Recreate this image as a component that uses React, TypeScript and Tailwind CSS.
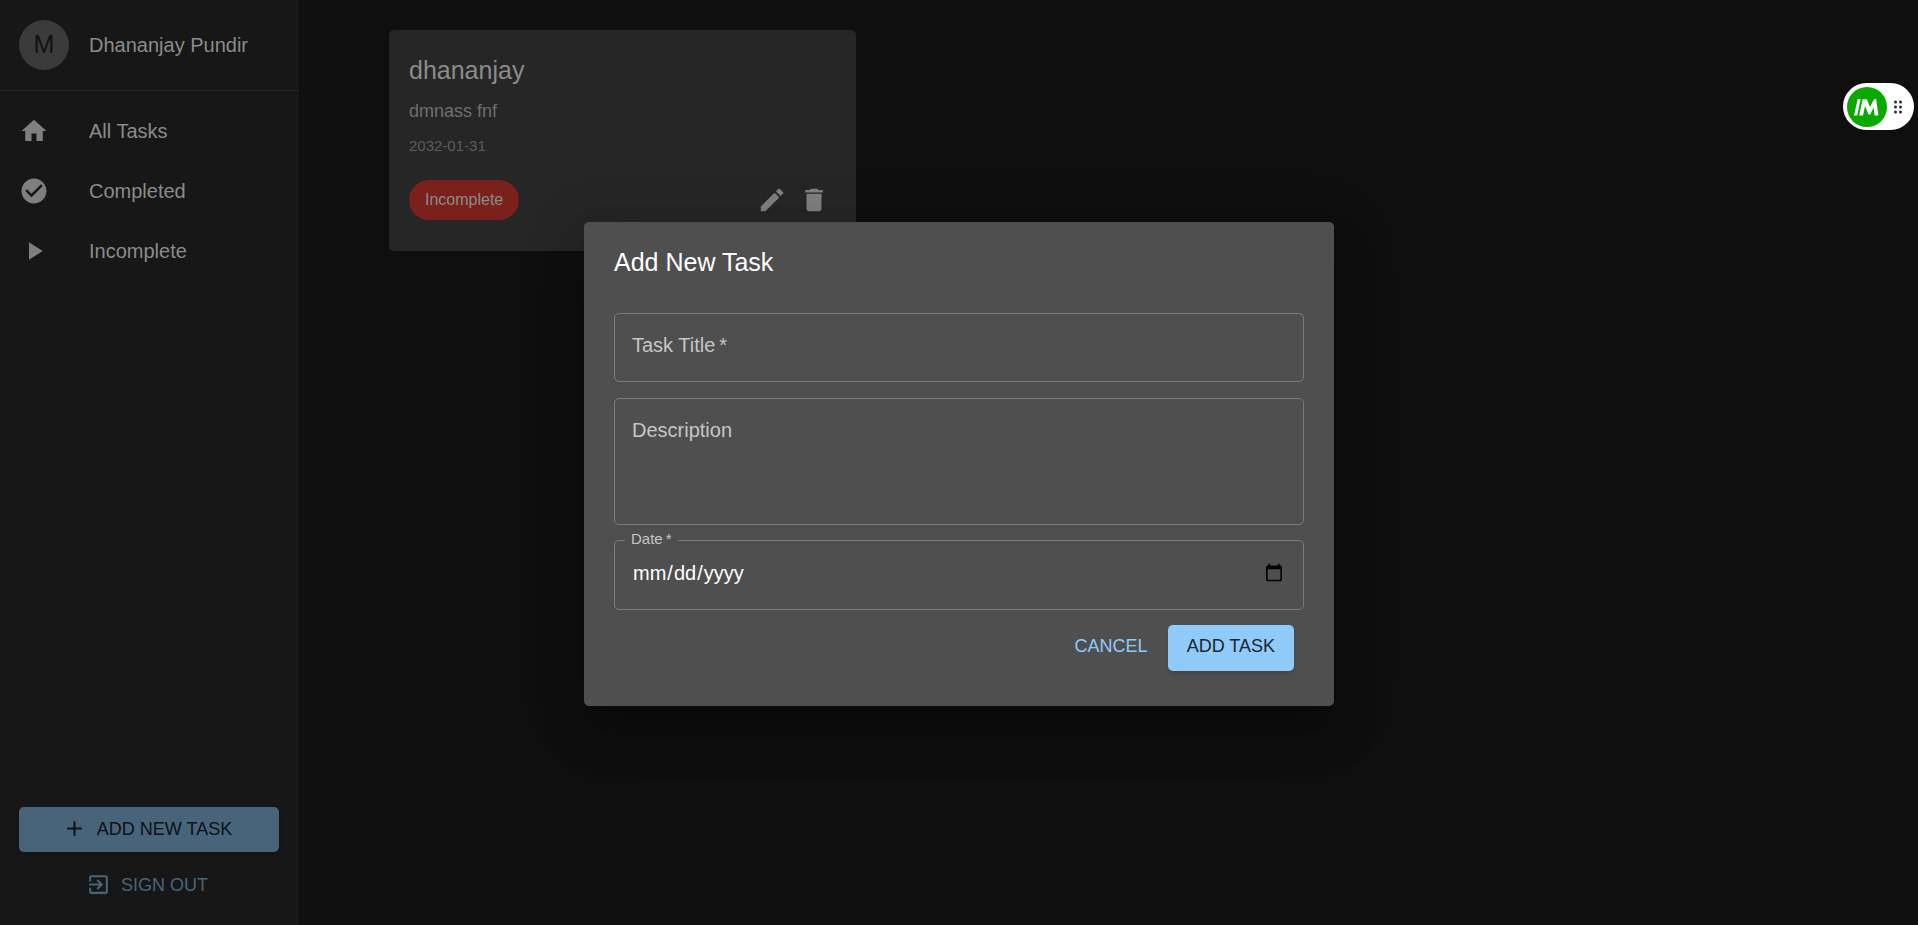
import React from "react";
import {
  MdHome,
  MdCheckCircle,
  MdPlayArrow,
  MdAdd,
  MdExitToApp,
  MdEdit,
  MdDelete,
} from "react-icons/md";

const navItems = [
  { label: "All Tasks", Icon: MdHome },
  { label: "Completed", Icon: MdCheckCircle },
  { label: "Incomplete", Icon: MdPlayArrow },
];

function Sidebar() {
  return (
    <aside className="flex w-[299px] shrink-0 flex-col bg-[#171717] text-[#8b8b8b]">
      <div className="flex items-center gap-5 border-b border-[#262626] px-[19px] py-5">
        <div className="flex size-[50px] items-center justify-center rounded-full bg-[#3b3b3b] text-[25px] text-[#121212]">
          M
        </div>
        <span className="text-xl">Dhananjay Pundir</span>
      </div>
      <nav className="flex flex-col py-2.5">
        {navItems.map(({ label, Icon }) => (
          <a key={label} href="#" className="flex h-[60px] items-center gap-10 px-[19px] text-xl">
            <Icon className="size-[30px] text-[#7f7f7f]" />
            {label}
          </a>
        ))}
      </nav>
      <div className="mt-auto flex flex-col gap-3 pr-5 pb-5 pl-[19px]">
        <button className="flex h-[45px] items-center justify-center gap-2.5 rounded-[5px] bg-[#48647b] pr-1 pb-0.5 text-lg text-[#0c1115] shadow-md">
          <MdAdd className="size-[25px]" />
          ADD NEW TASK
        </button>
        <button className="flex h-[41px] items-center justify-center gap-2.5 pr-1 text-lg text-[#48647b]">
          <MdExitToApp className="size-[25px]" />
          SIGN OUT
        </button>
      </div>
    </aside>
  );
}

function TaskCard() {
  return (
    <article className="flex flex-col rounded-[5px] bg-[#262626] px-5 pt-5 pb-[31px]">
      <h2 className="text-[25px] leading-10 text-[#8b8b8b]">dhananjay</h2>
      <p className="mt-[9px] text-lg leading-6 text-[#6f6f6f]">dmnass fnf</p>
      <p className="mt-[11px] text-[15px] leading-6 text-[#5c5c5c]">2032-01-31</p>
      <div className="mt-[22px] flex items-center justify-between">
        <span className="flex h-10 items-center rounded-full bg-[#7a211b] px-4 text-base text-[#8b8b8b]">
          Incomplete
        </span>
        <div className="flex gap-3 pr-[7px] text-[#7f7f7f]">
          <button aria-label="Edit">
            <MdEdit className="size-[30px]" />
          </button>
          <button aria-label="Delete">
            <MdDelete className="size-[30px]" />
          </button>
        </div>
      </div>
    </article>
  );
}

function TaskDialog() {
  const box =
    "w-full rounded-[5px] border border-[#7c7c7c] bg-transparent text-xl text-white outline-none placeholder:text-[#c6c6c6] placeholder:opacity-100";
  return (
    <div
      role="dialog"
      aria-labelledby="dialog-title"
      className="w-[750px] max-w-full rounded-[5px] bg-[#4f4f4f] px-[30px] pt-5 pb-[35px] shadow-[0_14px_19px_-9px_rgba(0,0,0,0.2),0_30px_48px_4px_rgba(0,0,0,0.14),0_11px_58px_10px_rgba(0,0,0,0.12)]"
    >
      <h1 id="dialog-title" className="text-[25px] leading-10 text-white">
        Add New Task
      </h1>
      <form className="mt-[31px] flex flex-col">
        <input
          aria-label="Task Title"
          placeholder={"Task Title\u2009*"}
          className={`${box} h-[69px] px-[17px] pb-1`}
        />
        <textarea
          aria-label="Description"
          placeholder="Description"
          className={`${box} mt-4 block h-[127px] resize-none px-[17px] pt-[17px]`}
        />
        <div className="relative mt-[15px]">
          <label
            htmlFor="date"
            className="absolute -top-[11px] left-[11px] bg-[#4f4f4f] px-1.5 text-[15px] leading-5 text-[#c6c6c6]"
          >
            {"Date\u2009*"}
          </label>
          <input id="date" type="date" className={`${box} h-[70px] px-[17px] pb-1`} />
        </div>
        <div className="mt-[15px] flex items-center justify-end gap-5 pr-2.5">
          <button type="button" className="pb-1 text-lg text-[#90caf9]">
            CANCEL
          </button>
          <button
            type="submit"
            className="h-[46px] rounded-[5px] bg-[#90caf9] px-[19px] pb-1 text-lg text-[#1b262f] shadow-md"
          >
            ADD TASK
          </button>
        </div>
      </form>
    </div>
  );
}

function FloatingWidget() {
  return (
    <button
      aria-label="Open assistant"
      className="absolute top-[83px] right-1 flex h-[47px] w-[71px] items-center gap-[7px] rounded-full bg-white pl-1"
    >
      <svg viewBox="0 0 40 40" className="size-10">
        <circle cx="20" cy="20" r="20" fill="#0aa800" />
        <path
          d="M10.600 12.300H13.600L10.200 28.500H7ZM15.600 12.300H19.800L23 20L27 12.300H29.200L31.400 28.500H27.600L26.600 20.500L23.200 27.500H21.600L18 19L16 28.500H12.200Z"
          fill="#fff"
        />
      </svg>
      <svg viewBox="0 0 8 14" className="h-3.5 w-2" fill="#2a2a3c">
        {[2, 7, 12].map((y) => (
          <React.Fragment key={y}>
            <circle cx="1.500" cy={y} r="1.500" />
            <circle cx="6.500" cy={y} r="1.500" />
          </React.Fragment>
        ))}
      </svg>
    </button>
  );
}

export default function App() {
  return (
    <div className="relative flex min-h-screen bg-[#0f0f0f] font-['Liberation_Sans',Arial,sans-serif]">
      <Sidebar />
      <main className="grid flex-1 grid-cols-3 content-start gap-5 py-[30px] pr-[88px] pl-[90px]">
        <TaskCard />
      </main>
      <div className="absolute inset-0 flex items-center justify-center pt-[3px]">
        <TaskDialog />
      </div>
      <FloatingWidget />
    </div>
  );
}
